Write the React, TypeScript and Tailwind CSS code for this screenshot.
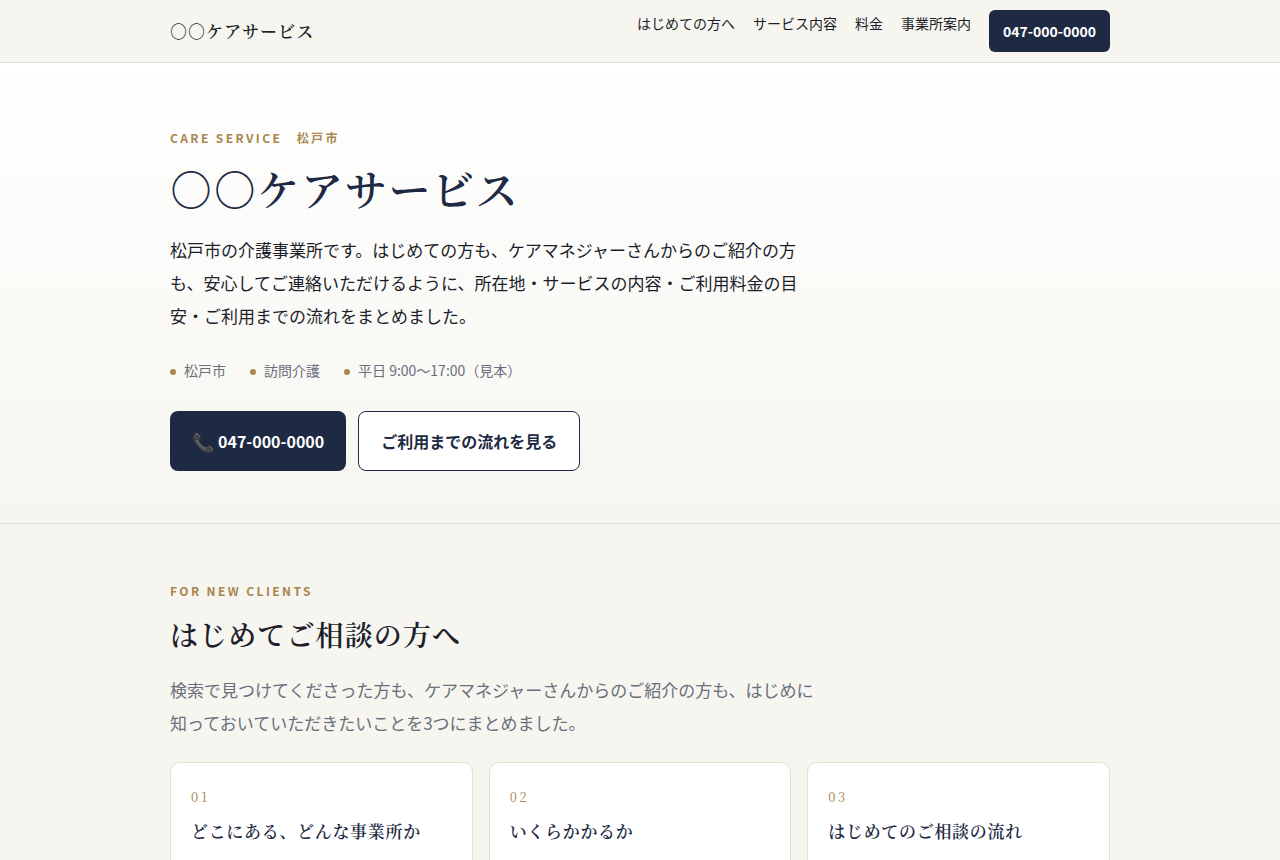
const serif = "font-['Noto_Serif_CJK_JP','Noto_Serif_JP','Noto_Serif','Liberation_Serif',serif]";

const points = ["松戸市", "訪問介護", "平日 9:00〜17:00（見本）"];
const links = [
  ["はじめての方へ", "#first"],
  ["サービス内容", "#service"],
  ["料金", "#price"],
  ["事業所案内", "#office"],
];
const cards = [
  ["01", "どこにある、どんな事業所か"],
  ["02", "いくらかかるか"],
  ["03", "はじめてのご相談の流れ"],
];

export default function App() {
  return (
    <div className="h-screen overflow-hidden bg-[#f6f5f0] font-['Noto_Sans_CJK_JP',sans-serif] text-[17px] text-[#1c1f2a]">
      <header className="border-b border-[#e2dfd5]">
        <div className="mx-auto flex max-w-[980px] items-center justify-between px-5 py-2.5">
          <a href="#top" className={`${serif} text-[17px] font-semibold tracking-[0.06em]`}>○○ケアサービス</a>
          <nav className="flex gap-[18px] text-sm leading-[27px]">
            {links.map(([t, h]) => <a key={t} href={h}>{t}</a>)}
            <a href="tel:0470000000" className="flex h-[42px] items-center rounded-md bg-[#1e2a44] px-3.5 font-bold text-white">047-000-0000</a>
          </nav>
        </div>
      </header>
      <main>
        <section className="border-b border-[#e2dfd5] bg-linear-to-b from-white to-[#f6f5f0]">
          <div className="mx-auto max-w-[980px] px-5 pt-16 pb-[52px]">
            <p className="text-xs leading-[21px] font-bold tracking-[0.2em] text-[#a8864e]">CARE SERVICE　松戸市</p>
            <h1 className={`${serif} mt-2.5 text-[42px] leading-[60px] font-semibold tracking-[0.04em] text-[#1e2a44]`}>○○ケアサービス</h1>
            <p className="mt-[15px] max-w-[640px] leading-[33px]">松戸市の介護事業所です。はじめての方も、ケアマネジャーさんからのご紹介の方も、安心してご連絡いただけるように、所在地・サービスの内容・ご利用料金の目安・ご利用までの流れをまとめました。</p>
            <ul className="mt-[25px] flex gap-6 text-sm leading-[26px] text-[#6b6f7b]">
              {points.map((t) => <li key={t}><span className="mr-2 inline-block size-1.5 rounded-full bg-[#a8864e] align-middle" />{t}</li>)}
            </ul>
            <div className="mt-7 flex gap-3 text-base font-bold">
              <a href="tel:0470000000" className="flex h-[60px] items-center gap-1 rounded-lg bg-[#1e2a44] px-[22px] text-white"><span className="text-lg">📞</span>047-000-0000</a>
              <a href="#flow" className="flex h-[60px] items-center rounded-lg border border-[#1e2a44] bg-white px-[22px] text-[#1e2a44]">ご利用までの流れを見る</a>
            </div>
          </div>
        </section>
        <section className="mx-auto max-w-[980px] px-5 pt-14">
          <p className="text-xs leading-[21px] font-bold tracking-[0.2em] text-[#a8864e]">FOR NEW CLIENTS</p>
          <h2 className={`${serif} mt-2.5 text-[28px] leading-[47px] font-semibold tracking-[0.04em]`}>はじめてご相談の方へ</h2>
          <p className="mt-[15px] max-w-[660px] leading-[33px] text-[#6b6f7b]">検索で見つけてくださった方も、ケアマネジャーさんからのご紹介の方も、はじめに知っておいていただきたいことを3つにまとめました。</p>
          <div className="mt-[23px] grid grid-cols-3 gap-4">
            {cards.map(([n, t]) => (
              <article key={n} className="min-h-44 rounded-[10px] border border-[#e2dfd5] bg-white p-5">
                <p className={`${serif} text-[13px] leading-[27px] tracking-[0.2em] text-[#a8864e]`}>{n}</p>
                <h3 className={`${serif} mt-1.5 text-[17px] leading-[30px] font-semibold tracking-[0.04em] text-[#1e2a44]`}>{t}</h3>
              </article>
            ))}
          </div>
        </section>
      </main>
    </div>
  );
}
